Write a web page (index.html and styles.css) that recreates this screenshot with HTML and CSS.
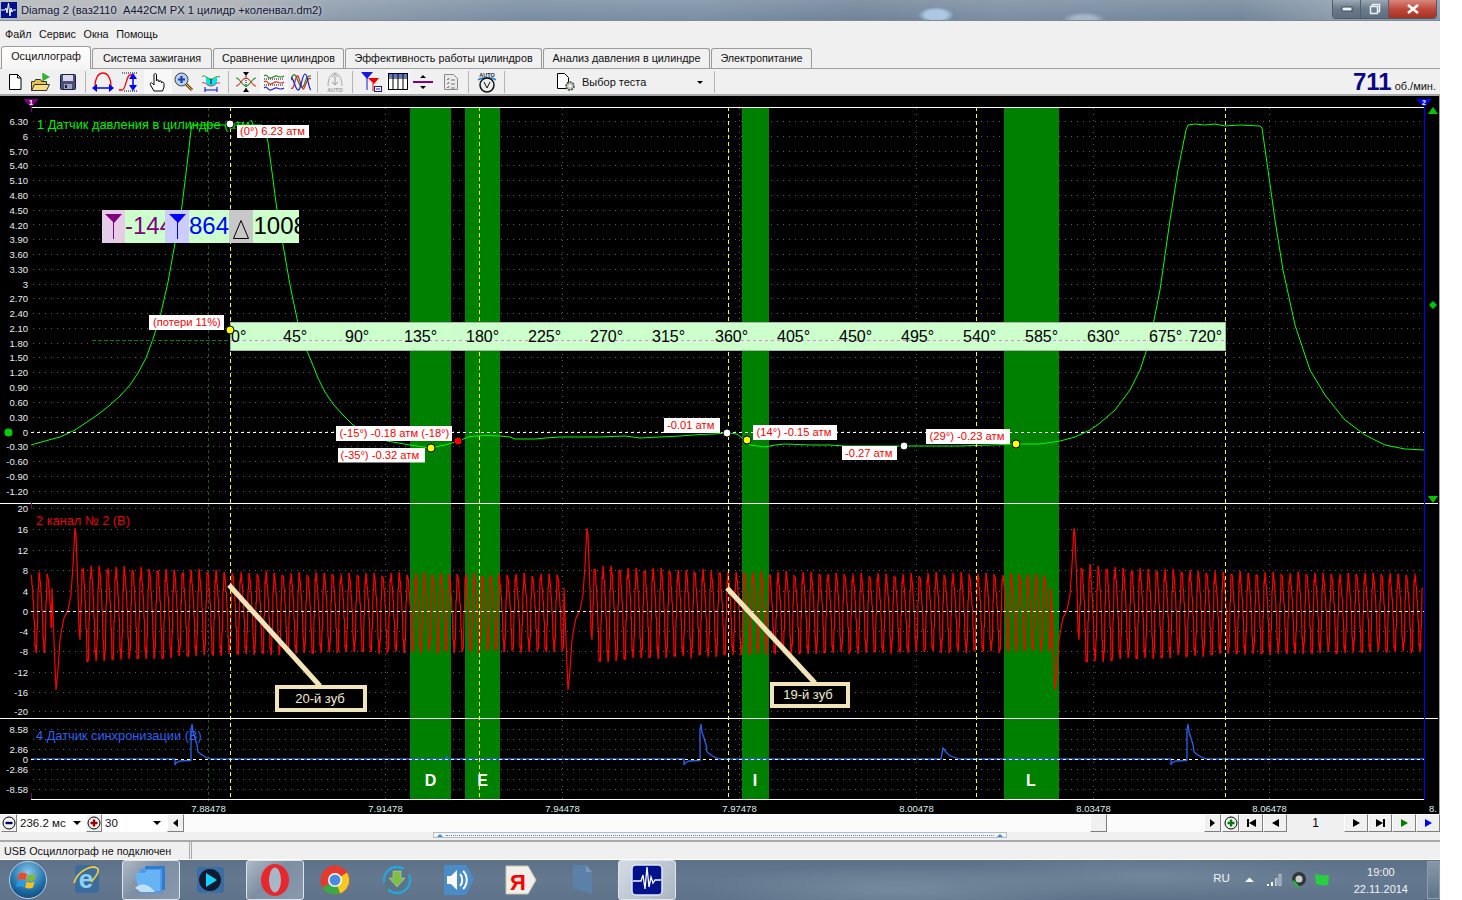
FILE: index.html
```html
<!DOCTYPE html>
<html lang="ru">
<head>
<meta charset="utf-8">
<title>Diamag 2</title>
<link rel="stylesheet" href="styles.css">
</head>
<body>
<div class="window">
  <header class="titlebar">
    <svg class="app-icon" width="16" height="16" viewBox="0 0 16 16"><rect width="16" height="16" fill="#00128c"/><path d="M0 8h4l1-2 1 5 1.500-10 1.500 13 1-8 1 4 1-2h3" fill="none" stroke="#fff"/></svg>
    <span class="title-text">Diamag 2 (ваз2110  A442CM PX 1 цилидр +коленвал.dm2)</span>
    <div class="winbtns">
      <span class="winbtn"><svg width="12" height="8" viewBox="0 0 12 8"><rect x="1" y="2" width="10" height="4" fill="#eef2f6" stroke="#445"/></svg></span>
      <span class="winbtn"><svg width="12" height="12" viewBox="0 0 12 12"><rect x="3.500" y="1.500" width="7" height="7" fill="none" stroke="#eef2f6" stroke-width="1.500"/><rect x="1.500" y="3.500" width="7" height="7" fill="#6d7f92" stroke="#eef2f6" stroke-width="1.500"/></svg></span>
      <span class="winbtn winbtn-close"><svg width="14" height="10" viewBox="0 0 14 10"><path d="M2 1l10 8M12 1L2 9" stroke="#fff" stroke-width="2.600"/></svg></span>
    </div>
  </header>

  <nav class="menubar">
    <span>Файл</span><span>Сервис</span><span>Окна</span><span>Помощь</span>
  </nav>

  <div class="tabs">
    <span class="tab tab-active t1">Осциллограф</span>
    <span class="tab t2">Система зажигания</span>
    <span class="tab t3">Сравнение цилиндров</span>
    <span class="tab t4">Эффективность работы цилиндров</span>
    <span class="tab t5">Анализ давления в цилиндре</span>
    <span class="tab t6">Электропитание</span>
  </div>

  <div class="toolbar">
    <span class="tb w27"><svg width="16" height="18" viewBox="0 0 16 18"><path d="M2.500 1.500h8l3.500 3.500v11.500h-11.500z" fill="#fff" stroke="#000"/><path d="M10.500 1.500v3.500h3.500" fill="none" stroke="#000"/></svg></span>
    <span class="tb w26"><svg width="22" height="20" viewBox="0 0 22 20"><path d="M1.500 18.500v-9h3l1-2h5l1 2h5v9z" fill="#e8c050" stroke="#333"/><path d="M1.500 18.500l3-6h15l-3 6z" fill="#f8dc80" stroke="#333"/><path d="M13 1v8" stroke="#080"/><path d="M13 1l7 4-7 4z" fill="#2cb52c"/></svg></span>
    <span class="tb w28"><svg width="16" height="16" viewBox="0 0 16 16"><rect x=".5" y=".5" width="15" height="15" rx="1" fill="#4a5078" stroke="#1c1c40"/><rect x="3" y="1" width="10" height="6" fill="#d8d8e8"/><rect x="4" y="10" width="8" height="5" fill="#9ea4c0"/><rect x="5" y="11" width="2" height="3" fill="#223"/></svg></span>
    <i class="tsep"></i>
    <span class="tb w27"><svg width="24" height="22" viewBox="0 0 24 22"><path d="M4 15C4 8 7 2 12 2s8 6 8 13" fill="none" stroke="#f00" stroke-width="1.300"/><path d="M4 17h16" stroke="#00f" stroke-width="1.500"/><path d="M1 17l5-4v8zM23 17l-5-4v8z" fill="#00f"/></svg></span>
    <span class="tb w28"><svg width="24" height="22" viewBox="0 0 24 22"><path d="M1 19h3c4 0 4-14 8-15h3" fill="none" stroke="#f00" stroke-width="1.300"/><path d="M4 2h15M6 20h13" stroke="#000" stroke-dasharray="1 1"/><path d="M15 5v12" stroke="#00f" stroke-width="1.500"/><path d="M15 2l4 6h-8zM15 20l4-6h-8z" fill="#00f"/></svg></span>
    <span class="tb w28 tb-on"><svg width="18" height="20" viewBox="0 0 18 20"><path d="M5 19l-3.500-6c-1-2 1-3 2-1.500L5 13V3c0-2 2.500-2 2.500 0v6c0-1.500 2.500-1.500 2.500 0v1c0-1.500 2.500-1.500 2.500 0v1c0-1.500 2.500-1 2.500.5V15l-1.500 4z" fill="#fff" stroke="#000"/></svg></span>
    <span class="tb w24"><svg width="20" height="20" viewBox="0 0 20 20"><path d="M12 12l6 6" stroke="#6a4a08" stroke-width="3"/><path d="M12 12l6 6" stroke="#e0c050" stroke-width="1"/><circle cx="7.500" cy="7.500" r="6.500" fill="#b6d0f0" stroke="#444"/><path d="M7.500 4v7M4 7.500h7" stroke="#1c3caa" stroke-width="2.200"/></svg></span>
    <span class="tb w29"><svg width="20" height="20" viewBox="0 0 20 20"><path d="M5 5l4 2h3l4-2v6l-3 3H7l-2-3z" fill="#00e8f0"/><path d="M1 5c2-3 5 1 8 2s6-4 10-2" fill="none" stroke="#1a9a1a"/><path d="M1 11c3-2 5 3 9 3s5-4 9-3" fill="none" stroke="#f03030"/><path d="M4 18h12M4 15v5M16 15v5" stroke="#00f" fill="none"/><path d="M10 7v5" stroke="#000"/></svg></span>
    <i class="tsep"></i>
    <span class="tb w28"><svg width="20" height="20" viewBox="0 0 20 20"><path d="M0 6c4 0 6 8 10 8s6-8 10-8" fill="none" stroke="#1a8a1a" stroke-width="1.200"/><path d="M0 14c4 0 6-8 10-8s6 8 10 8" fill="none" stroke="#e03030" stroke-width="1.200"/><path d="M10 0v20" stroke="#000" stroke-dasharray="1 1"/><path d="M7 0h6l-3 4zM7 20h6l-3-4z" fill="#000"/></svg></span>
    <span class="tb w28 tb-on"><svg width="20" height="20" viewBox="0 0 20 20"><path d="M0 4c3-3 4 3 7 2s4-3 6-2 4 2 7 0" fill="none" stroke="#1a8a1a" stroke-width="1.200"/><path d="M0 10c3-3 4 3 7 2s4-3 6-2 4 2 7 0" fill="none" stroke="#e02020" stroke-width="1.200"/><path d="M0 16c3-3 4 3 7 2s4-3 6-2 4 2 7 0" fill="none" stroke="#1818e0" stroke-width="1.200"/><path d="M0 7h20M0 13h20" stroke="#000" stroke-dasharray="1 1"/></svg></span>
    <span class="tb w26"><svg width="20" height="20" viewBox="0 0 20 20"><path d="M0 8c3-10 5-4 7 1s4 9 6 4 3-10 7-9" fill="none" stroke="#1a8a1a" stroke-width="1.200"/><path d="M0 16c3 3 4-10 6-12s4 12 6 13 4-14 8-10" fill="none" stroke="#e02020" stroke-width="1.200"/><path d="M0 5c4 4 4 12 7 13s4-16 7-16 3 14 6 16" fill="none" stroke="#1818e0" stroke-width="1.200"/></svg></span>
    <i class="tsep"></i>
    <span class="tb w28"><svg width="20" height="20" viewBox="0 0 20 20"><path d="M3 14C3 7 6 1 10 1s7 6 7 13" fill="#eee" stroke="#aaa"/><path d="M10 4v8" stroke="#999"/><path d="M7 5l3-3 3 3M7 10l3 3 3-3" fill="none" stroke="#999"/><text class="auto-mini auto-grey" x="10" y="19.500" text-anchor="middle">AUTO</text></svg></span>
    <i class="tsep"></i>
    <span class="tb w30"><svg width="22" height="22" viewBox="0 0 22 22"><path d="M1 1h12L7 8z" fill="#1818e0"/><path d="M7 7v12" stroke="#1818e0"/><path d="M8 7h11l-5 6z" fill="#f00000"/><path d="M13 12v8" stroke="#f00"/><rect x="14.500" y="15.500" width="7" height="5" fill="#fff" stroke="#1818a0"/><path d="M16 18h4" stroke="#1818a0"/></svg></span>
    <span class="tb w24 tb-on"><svg width="20" height="18" viewBox="0 0 20 18"><rect x=".5" y=".5" width="19" height="16" fill="#fff" stroke="#000"/><rect x="1" y="1" width="18" height="3" fill="#5878d8"/><path d="M5 1v16M10 1v16M15 1v16M1 5h18" stroke="#000"/></svg></span>
    <span class="tb w26"><svg width="20" height="18" viewBox="0 0 20 18"><path d="M0 9h20" stroke="#800080" stroke-width="2"/><path d="M7 5h6l-3-3zM7 13h6l-3 3z" fill="#000"/></svg></span>
    <span class="tb w29"><svg width="16" height="18" viewBox="0 0 16 18"><path d="M1.500 1.500h9l4 4v11h-13z" fill="#eaeaea" stroke="#888"/><path d="M4 6l1 1 1-2M4 10l1 1 1-2M4 14l1 1 1-2M8 7h4M8 11h4M8 15h4" fill="none" stroke="#777"/></svg></span>
    <i class="tsep"></i>
    <span class="tb w29"><svg width="22" height="22" viewBox="0 0 22 22"><text class="auto-mini auto-dark" x="11" y="5.500" text-anchor="middle">AUTO</text><path d="M2 9c4-3 14-3 18 0" fill="none" stroke="#1878e8" stroke-width="1.500"/><circle cx="11" cy="14" r="7" fill="#eee" stroke="#111" stroke-width="1.500"/><path d="M8 11l3 6 3-6" fill="none" stroke="#111"/></svg></span>
    <i class="tsep"></i>
    <div class="testsel">
      <svg width="22" height="20" viewBox="0 0 22 20"><path d="M1.500 1.500h7l4 4v11h-11z" fill="#fff" stroke="#000"/><circle cx="14" cy="14" r="4" fill="#b8c8a8" stroke="#444" stroke-width="1.500" stroke-dasharray="2 1"/><circle cx="14" cy="14" r="1.500" fill="#fff"/></svg>
      <span class="testsel-text">Выбор теста</span>
      <i class="caret"></i>
    </div>
    <i class="tsep"></i>
    <div class="rpm"><b>711</b><span>об./мин.</span></div>
  </div>

  <div class="chart">
    <svg id="scope" class="scope" width="1440" height="718" viewBox="0 96 1440 718">
      <g id="grid"></g>

      <g class="bars">
        <rect x="410" y="107" width="41" height="692"/>
        <rect x="465" y="107" width="35" height="692"/>
        <rect x="742" y="107" width="27" height="692"/>
        <rect x="1004" y="107" width="55" height="692"/>
      </g>

      <g class="frame">
        <path d="M31 107.500H1424M0 503.500H1438M0 718.500H1438M31 799.500H1424"/>
      </g>
      <path class="edge-blue" d="M1424.500 100V800"/>
      <path class="edge-purple" d="M31.500 100V112M31.500 503V509M31.500 793V799"/>
      <path class="marker-purple" d="M23 99h16l-8 8z"/>
      <text class="marker-num" x="31" y="104.500">1</text>
      <path class="marker-blue" d="M1416 99h16l-8 8z"/>
      <text class="marker-num" x="1424" y="104.500">2</text>
      <path class="tri" d="M1433 107l5 7h-10z"/>
      <path class="tri" d="M1433 301l4 4-4 4-4-4z"/>
      <path class="tri" d="M1428 496h10l-5 7z"/>
      <circle class="dot-green" cx="8.500" cy="432.500" r="4"/>

      <polyline id="trace1" class="trace-green"/>
      <polyline id="trace2" class="trace-red"/>
      <polyline id="trace4" class="trace-blue"/>

      <path class="zero" d="M31 432.500H1424M31 611.500H1424M31 759.500H1424"/>
      <path class="cursor" d="M230.500 107V799M479.500 107V799M728.500 107V799M976.500 107V799M1225.500 107V799"/>
      <path class="loss" d="M92 340.500H230"/>

      <g class="ruler">
        <rect class="ruler-bg" x="230.500" y="322.500" width="995" height="28"/>
        <path class="ruler-line" d="M231 340.500H1225"/>
        <g class="ruler-text">
          <text x="231" y="342">0°</text><text x="283" y="342">45°</text><text x="345" y="342">90°</text><text x="404" y="342">135°</text><text x="466" y="342">180°</text><text x="528" y="342">225°</text><text x="590" y="342">270°</text><text x="652" y="342">315°</text><text x="715" y="342">360°</text><text x="777" y="342">405°</text><text x="839" y="342">450°</text><text x="901" y="342">495°</text><text x="963" y="342">540°</text><text x="1025" y="342">585°</text><text x="1087" y="342">630°</text><text x="1149" y="342">675°</text><text x="1189" y="342">720°</text>
        </g>
      </g>

      <text class="ttl ttl-green" x="37" y="128.500">1 Датчик давления в цилиндре (атм)</text>
      <text class="ttl ttl-red" x="36" y="524.500">2 канал № 2 (В)</text>
      <text class="ttl ttl-blue" x="36" y="739.500">4 Датчик синхронизации (В)</text>

      <g class="axis">
        <text x="28" y="124.500">6.30</text><text x="28" y="139.500">6</text><text x="28" y="154.500">5.70</text><text x="28" y="168.500">5.40</text><text x="28" y="183.500">5.10</text><text x="28" y="198.500">4.80</text><text x="28" y="213.500">4.50</text><text x="28" y="228.500">4.20</text><text x="28" y="242.500">3.90</text><text x="28" y="257.500">3.60</text><text x="28" y="272.500">3.30</text><text x="28" y="287.500">3</text><text x="28" y="302">2.70</text><text x="28" y="316.500">2.40</text><text x="28" y="331.500">2.10</text><text x="28" y="346.500">1.80</text><text x="28" y="361">1.50</text><text x="28" y="376">1.20</text><text x="28" y="391">0.90</text><text x="28" y="405.500">0.60</text><text x="28" y="420.500">0.30</text><text x="28" y="435.500">0</text><text x="28" y="450">-0.30</text><text x="28" y="465">-0.60</text><text x="28" y="480">-0.90</text><text x="28" y="495">-1.20</text>
        <text x="28" y="512">20</text><text x="28" y="533">16</text><text x="28" y="554">12</text><text x="28" y="574">8</text><text x="28" y="595">4</text><text x="28" y="615">0</text><text x="28" y="635">-4</text><text x="28" y="655">-8</text><text x="28" y="676">-12</text><text x="28" y="696">-16</text><text x="28" y="715">-20</text>
        <text x="28" y="733">8.58</text><text x="28" y="753">2.86</text><text x="28" y="763">0</text><text x="28" y="773">-2.86</text><text x="28" y="793">-8.58</text>
      </g>
      <g class="xaxis">
        <text x="208.500" y="811.500">7.88478</text><text x="385.500" y="811.500">7.91478</text><text x="562.500" y="811.500">7.94478</text><text x="739.500" y="811.500">7.97478</text><text x="916.500" y="811.500">8.00478</text><text x="1093.500" y="811.500">8.03478</text><text x="1269.500" y="811.500">8.06478</text><text x="1433" y="811.500">8.</text>
      </g>

      <g class="legend">
        <rect class="lg-green" x="102" y="210" width="197" height="33"/>
        <rect class="lg-pink" x="102" y="210" width="23" height="33"/>
        <rect class="lg-blue" x="165" y="210" width="24" height="33"/>
        <rect class="lg-grey" x="229" y="210" width="24" height="33"/>
        <path class="ant-purple" d="M105 214h17l-8 9z"/><path class="ant-line-p" d="M113.500 218V239"/>
        <path class="ant-blue" d="M169 214h17l-8 9z"/><path class="ant-line-b" d="M177.500 218V239"/>
        <path class="delta" d="M233.500 238.500l7.500-18 7.500 18z"/>
        <svg x="125" y="210" width="40" height="33" viewBox="125 210 40 33"><text class="lg-text lg-t1" x="125" y="234">-144</text></svg>
        <text class="lg-text lg-t2" x="189" y="234">864</text>
        <svg x="253" y="210" width="46" height="33" viewBox="253 210 46 33"><text class="lg-text lg-t3" x="253.500" y="234">1008</text></svg>
      </g>

      <g class="tags">
        <rect x="237" y="125" width="72" height="13"/><rect x="149" y="315" width="75" height="15"/><rect class="tag-sh" x="338" y="448" width="87" height="14.500"/><rect x="336" y="426" width="116" height="15"/><rect x="664" y="418" width="56" height="15"/><rect x="753" y="425" width="84" height="15"/><rect x="842" y="446" width="55" height="14"/><rect x="926" y="429" width="84" height="15"/>
      </g>
      <g class="tag-text">
        <text x="240" y="135">(0°) 6.23 атм</text>
        <text x="153" y="326">(потери 11%)</text>
        <text x="339.500" y="437">(-15°) -0.18 атм (-18°)</text>
        <text x="340.500" y="459">(-35°) -0.32 атм</text>
        <text x="667" y="429">-0.01 атм</text>
        <text x="756.500" y="436">(14°) -0.15 атм</text>
        <text x="845" y="457">-0.27 атм</text>
        <text x="929.500" y="440">(29°) -0.23 атм</text>
      </g>

      <g class="dots">
        <circle class="d-w" cx="230" cy="124" r="4"/>
        <circle class="d-y" cx="230" cy="330" r="4"/>
        <circle class="d-y" cx="431" cy="448" r="4"/>
        <circle class="d-r" cx="458" cy="441" r="4"/>
        <circle class="d-w" cx="727" cy="433" r="4"/>
        <circle class="d-y" cx="747" cy="440" r="4"/>
        <circle class="d-w" cx="904" cy="446" r="4"/>
        <circle class="d-y" cx="1016" cy="444" r="4"/>
      </g>

      <path class="callout" d="M229 585L320 686M727 588L815 683"/>
      <rect class="callbox" x="277" y="687" width="88" height="23"/>
      <rect class="callbox" x="772" y="684" width="76" height="22"/>
      <text class="calltext" x="320" y="702.500">20-й зуб</text>
      <text class="calltext" x="808" y="698.500">19-й зуб</text>

      <g class="big-letters">
        <text x="430.500" y="786">D</text><text x="482.500" y="786">E</text><text x="755" y="786">I</text><text x="1031" y="786">L</text>
      </g>
    </svg>
  </div>

  <div class="controls">
    <span class="cbtn round"><svg width="14" height="14" viewBox="0 0 14 14"><circle cx="7" cy="7" r="6" fill="#f4f4f4" stroke="#000"/><path d="M3.500 7h7" stroke="#000066" stroke-width="2.400"/></svg></span>
    <span class="field f-time">236.2 мс<i class="caret"></i></span>
    <span class="cbtn round"><svg width="14" height="14" viewBox="0 0 14 14"><circle cx="7" cy="7" r="6" fill="#f4f4f4" stroke="#000"/><path d="M3.500 7h7M7 3.500v7" stroke="#a00000" stroke-width="2.400"/></svg></span>
    <span class="field f-num">30<i class="caret"></i></span>
    <span class="cbtn small"><i class="tri-l"></i></span>
    <div class="track"><span class="thumb"></span></div>
    <span class="cbtn small"><i class="tri-r"></i></span>
    <span class="cbtn round plusg"><svg width="14" height="14" viewBox="0 0 14 14"><circle cx="7" cy="7" r="6" fill="#f4f4f4" stroke="#000"/><path d="M3.500 7h7M7 3.500v7" stroke="#008000" stroke-width="2.400"/></svg></span>
    <span class="cbtn nav"><i class="bar"></i><i class="tri-l big"></i></span>
    <span class="cbtn nav"><i class="tri-l big"></i></span>
    <span class="pageno">1</span>
    <span class="cbtn nav"><i class="tri-r big"></i></span>
    <span class="cbtn nav"><i class="tri-r big"></i><i class="bar"></i></span>
    <span class="cbtn nav"><i class="tri-r big green"></i></span>
    <span class="cbtn nav"><i class="tri-r big blue"></i></span>
  </div>

  <div class="hscroll">
    <div class="hthumb"><i class="up"></i><span class="hdots"></span><i class="up"></i></div>
  </div>

  <div class="statusbar">
    <span class="status-a">USB Осциллограф не подключен</span>
    <span class="status-b"></span>
  </div>

  <footer class="taskbar">
    <span class="orb"><svg width="40" height="40" viewBox="0 0 40 40"><defs><radialGradient id="orbg" cx=".5" cy=".3" r=".8"><stop offset="0" stop-color="#8cc8ec"/><stop offset=".6" stop-color="#1f6fa8"/><stop offset="1" stop-color="#0c3a68"/></radialGradient></defs><circle cx="20" cy="20" r="18.500" fill="url(#orbg)" stroke="#b8cfe0"/><path d="M11 14c3-2 5-1 8 0l-1.500 6c-3-1-5-1-8 0z" fill="#f04a24"/><path d="M20 14.500c3 1 5 1 8-.5l-1.500 6c-3 1.500-5 1-8 .5z" fill="#7dbb2c"/><path d="M9.500 21c3-1 5-1 8 0L16 27c-3-1-5-1-8 0z" fill="#2c9ae0"/><path d="M18.500 22c3 1 5 1 8-.5L25 27.500c-3 1.500-5 1-8 0z" fill="#f6c020"/></svg></span>
    <span class="slot"><svg width="34" height="36" viewBox="0 0 34 36"><rect x="5" y="3" width="24" height="28" rx="3" fill="#3c6c9c"/><text class="ie" x="16" y="26">e</text><path d="M4 21C8 8 22 3 27 6c3 2 0 8-6 14" fill="none" stroke="#f0c838" stroke-width="1.800"/></svg></span>
    <span class="slot slot-on"><svg width="36" height="32" viewBox="0 0 36 32"><path d="M12 2h20v24H12z" fill="#2e7cd0"/><path d="M7 5h22v24H7z" fill="#4e9ae8"/><path d="M2 9h10l2-3h13v21H6z" fill="#66b4f4"/><path d="M2 24c6-6 14-4 20 4H8z" fill="#bfe0fa"/></svg></span>
    <span class="slot"><svg width="32" height="32" viewBox="0 0 32 32"><rect x="2" y="3" width="27" height="26" rx="3" fill="#3b6ca4"/><circle cx="15" cy="16" r="11" fill="#0e1c30"/><path d="M11 9l11 7-11 7z" fill="#18d0ff"/></svg></span>
    <span class="slot slot-on"><svg width="30" height="34" viewBox="0 0 30 34"><ellipse cx="15" cy="17" rx="14" ry="16" fill="#e8262c"/><ellipse cx="15" cy="17" rx="6" ry="12.500" fill="#a6b8c8"/></svg></span>
    <span class="slot"><svg width="30" height="30" viewBox="0 0 30 30"><circle cx="15" cy="15" r="14.500" fill="#e53a2e"/><path d="M15 15L27 7.500A14.500 14.500 0 0 1 20 28.600z" fill="#f6c822"/><path d="M15 15L20 28.600A14.500 14.500 0 0 1 2.400 22.500z" fill="#3ba745"/><circle cx="15" cy="15" r="7" fill="#fff"/><circle cx="15" cy="15" r="5.500" fill="#4a8cdc"/></svg></span>
    <span class="slot"><svg width="32" height="32" viewBox="0 0 32 32"><circle cx="16" cy="16" r="13" fill="#5c7488" stroke="#29a6d8" stroke-width="2.400" stroke-dasharray="30 8"/><path d="M12 7h8v7h4l-8 9-8-9h4z" fill="#7fbf42" stroke="#cce" stroke-width=".5"/></svg></span>
    <span class="slot"><svg width="32" height="36" viewBox="0 0 32 36"><path d="M1 3h22l8 14-8 16H1z" fill="#4a8cc8"/><path d="M4 14h4l6-6v20l-6-6H4z" fill="#fff"/><path d="M17 12c3 3 3 9 0 12M20 9c5 5 5 13 0 18" fill="none" stroke="#fff" stroke-width="2"/></svg></span>
    <span class="slot"><svg width="34" height="32" viewBox="0 0 34 32"><path d="M2 2h22l8 14-8 14H2z" fill="#f2f0ea" stroke="#c8c0b0"/><text class="ya" x="6" y="26">Я</text></svg></span>
    <span class="slot"><svg width="22" height="32" viewBox="0 0 22 32"><path d="M1 1h13l6 7v22L1 24z" fill="#5d80a8"/><path d="M14 1l6 7h-6z" fill="#7898bc"/></svg></span>
    <span class="slot slot-on slot-app"><svg width="32" height="32" viewBox="0 0 32 32"><rect x="1" y="1" width="30" height="30" rx="4" fill="#00128c" stroke="#dfe8f4" stroke-width="1.500"/><path d="M2 17h8l2-6 2 14 2-22 2 20 2-10 2 6 2-3h6" fill="none" stroke="#fff" stroke-width="1.300"/></svg></span>
    <div class="tray">
      <span class="lang">RU</span>
      <svg class="tray-caret" width="9" height="6" viewBox="0 0 9 6"><path d="M0 5l4.500-4.500L9 5z" fill="#f4f6f8"/></svg>
      <svg class="tray-signal" width="16" height="12" viewBox="0 0 16 12"><path d="M1 10h2v2H1z" fill="#fff"/><path d="M5 8h2v4H5z" fill="#fff"/><path d="M9.500 4.500h1.500v7H9.500zM13 .5h2v11h-2z" fill="none" stroke="#c8d0d8"/></svg>
      <svg class="tray-spk" width="16" height="18" viewBox="0 0 16 18"><circle cx="9" cy="8" r="7" fill="#30363a"/><circle cx="9" cy="8" r="3.500" fill="#c8ccc8"/><path d="M2 11l5 6 3-1-6-7z" fill="#2cae4a"/></svg>
      <svg class="tray-flag" width="16" height="14" viewBox="0 0 16 14"><path d="M1 1c4 1 9 2 14 1l-1 10c-4 1-8 0-12-1z" fill="#26d040"/></svg>
      <div class="clock"><span>19:00</span><span>22.11.2014</span></div>
      <span class="showdesk"></span>
    </div>
  </footer>
</div>
<script src="app.js"></script>
</body>
</html>
```

FILE: styles.css
```css
html, body {
  margin: 0;
  padding: 0;
  background: #fff;
  overflow: hidden;
}
body {
  font-family: "Liberation Sans", Arial, sans-serif;
  font-size: 11px;
  color: #000;
}
.window {
  width: 1440px;
  height: 900px;
  display: flex;
  flex-direction: column;
  background: #f0f0f0;
}
.titlebar {
  height: 21px;
  box-sizing: border-box;
  flex: none;
  display: flex;
  align-items: center;
  border-bottom: 1px solid #7f8a94;
  background:
    radial-gradient(ellipse 18px 8px at 936px 15px, rgba(176,205,232,.9) 0 60%, transparent 100%),
    radial-gradient(ellipse 22px 8px at 1084px 20px, rgba(184,200,216,.7) 0 50%, transparent 100%),
    linear-gradient(180deg, rgba(255,255,255,.14), rgba(255,255,255,0)),
    linear-gradient(90deg, #b4b8bb 0, #a8adb2 240px, #8d9cac 330px, #788ca2 520px, #7a8ea4 700px, #6f8398 860px, #7b8da2 1000px, #71869a 1240px, #8d9cac 1340px, #8a98a8 1440px);
}
.app-icon {
  margin: 0 0 0 1px;
  flex: none;
}
.title-text {
  margin-left: 4px;
  font-size: 11.200px;
  color: #11163c;
  white-space: pre;
  text-shadow: 0 0 4px #e4e4e4;
}
.winbtns {
  margin-left: auto;
  margin-right: 3px;
  align-self: flex-start;
  display: flex;
  height: 18px;
  border: 1px solid #4e5c6a;
  border-top: 0;
  border-radius: 0 0 4px 4px;
  overflow: hidden;
}
.winbtn {
  width: 27px;
  display: flex;
  align-items: center;
  justify-content: center;
  background: linear-gradient(180deg, #9ba8b5, #6a7a8b 50%, #5e6e80);
  border-right: 1px solid #52606e;
}
.winbtn-close {
  width: 47px;
  border-right: 0;
  background: linear-gradient(180deg, #d9877c, #bf4a3c 50%, #a63024);
}
.menubar {
  height: 25px;
  flex: none;
  display: flex;
  align-items: center;
  gap: 7.500px;
  padding: 0 0 0 5px;
  font-size: 10.800px;
  color: #111;
  box-sizing: border-box;
}
.tabs {
  height: 23px;
  flex: none;
  box-sizing: border-box;
  display: flex;
  align-items: flex-end;
  border-bottom: 1px solid #a0a0a0;
  padding-left: 1px;
  gap: 1px;
}
.tab {
  height: 20px;
  box-sizing: border-box;
  border: 1px solid #9a9a9a;
  border-bottom: 0;
  border-radius: 3px 3px 0 0;
  background: #f0f0f0;
  display: flex;
  align-items: center;
  justify-content: center;
  font-size: 10.800px;
  color: #111;
  white-space: nowrap;
  padding-bottom: 2px;
}
.tab-active {
  height: 23px;
  margin-bottom: -1px;
  background: #fff linear-gradient(180deg, #fff, #f4f4f4);
  padding-bottom: 4px;
}
.t1 { width: 90px; }
.t2 { width: 120px; }
.t3 { width: 131px; }
.t4 { width: 197px; }
.t5 { width: 167px; }
.t6 { width: 101px; }
.toolbar {
  height: 27px;
  flex: none;
  box-sizing: border-box;
  display: flex;
  align-items: center;
  border-bottom: 2px solid #a8a8a8;
  padding: 0 4px 0 1px;
}
.tb {
  height: 24px;
  flex: none;
  display: flex;
  align-items: center;
  justify-content: center;
}
.w24 { width: 24px; }
.w26 { width: 26px; }
.w27 { width: 27px; }
.w28 { width: 28px; }
.w29 { width: 29px; }
.w30 { width: 30px; }
.tb-on { background: #f8f8f8; }
.tsep {
  width: 1px;
  height: 22px;
  flex: none;
  background: #b4b4b4;
  margin: 0 3px;
}
.auto-mini {
  font: bold 5.500px "Liberation Sans", sans-serif;
}
.auto-grey { fill: #9a9a9a; }
.auto-dark { fill: #223; }
.testsel {
  width: 203px;
  box-sizing: border-box;
  padding-left: 48px;
  display: flex;
  align-items: center;
  flex: none;
}
.testsel-text {
  font-size: 11px;
  margin-left: 4px;
  color: #111;
}
.caret {
  width: 0;
  height: 0;
  border: 4px solid transparent;
  border-top-color: #000;
  border-bottom: 0;
  display: inline-block;
}
.testsel .caret {
  margin-left: 51px;
  margin-top: 2px;
  border-width: 3px;
  border-bottom: 0;
}
.rpm {
  margin-left: auto;
  display: flex;
  align-items: baseline;
  color: #111;
}
.rpm b {
  font-size: 24px;
  font-weight: bold;
  color: #0a0a80;
  margin-right: 3px;
  line-height: 24px;
}
.rpm span {
  font-size: 11px;
}
.chart {
  height: 718px;
  flex: none;
  background: #000;
  width: 1439px;
  border-right: 1px solid #a0a0a0;
  overflow: hidden;
}
.scope {
  display: block;
  font-family: "Liberation Sans", Arial, sans-serif;
}
.grid-dot {
  stroke: #5c5c5c;
  stroke-width: 1;
  stroke-dasharray: 1 5;
  fill: none;
}
.grid-first {
  stroke: #176017;
  stroke-dasharray: 3 3;
  fill: none;
}
.bars rect { fill: #008000; }
.frame path { stroke: #fff; stroke-width: 1; fill: none; }
.edge-blue { stroke: #0000ff; stroke-width: 1; fill: none; }
.edge-purple { stroke: #800080; fill: none; }
.marker-purple { fill: #800080; }
.marker-blue { fill: #0000ff; }
.marker-num {
  font-size: 7px;
  font-weight: bold;
  fill: #fff;
  text-anchor: middle;
}
.tri { fill: #00c800; }
.dot-green { fill: #00d000; }
.trace-green { stroke: #00ff00; stroke-width: 1; fill: none; }
.trace-red { stroke: #ff0000; stroke-width: 1.200; fill: none; stroke-linejoin: miter; }
.trace-blue { stroke: #2864f0; stroke-width: 1.300; fill: none; }
.zero { stroke: #fff; stroke-dasharray: 3 3; fill: none; }
.cursor { stroke: #ffff00; stroke-dasharray: 4 3; fill: none; }
.loss { stroke: #008000; stroke-dasharray: 4 2; fill: none; }
.ruler-bg { fill: #ccffcc; stroke: #a8b8a8; }
.ruler-line { stroke: #d88ad8; stroke-dasharray: 3 3; fill: none; }
.ruler-text text { font-size: 16px; fill: #000; }
.ttl { font-size: 12.800px; }
.ttl-green { fill: #00f000; }
.ttl-red { fill: #e80000; }
.ttl-blue { fill: #2864f0; }
.axis text {
  font-size: 9.500px;
  fill: #e8eef4;
  text-anchor: end;
}
.xaxis text {
  font-size: 9.500px;
  fill: #d8f0e8;
  text-anchor: middle;
}
.lg-green { fill: #ccffcc; }
.lg-pink { fill: #e6cce6; }
.lg-blue { fill: #ccccff; }
.lg-grey { fill: #c8c8c8; }
.ant-purple { fill: #800080; }
.ant-blue { fill: #0000ff; }
.ant-line-p { stroke: #800080; fill: none; }
.ant-line-b { stroke: #0000ff; fill: none; }
.delta { fill: none; stroke: #000; }
.lg-text { font-size: 24px; }
.lg-t1 { fill: #800080; }
.lg-t2 { fill: #0000ff; }
.lg-t3 { fill: #000; }
.tags rect { fill: #fff; }
.tags .tag-sh { stroke: #000; stroke-width: 0; }
.tag-text text { font-size: 11.200px; fill: #ff0000; }
.dots circle { stroke: #000; stroke-width: 1; }
.d-w { fill: #fff; }
.d-y { fill: #ffff00; }
.d-r { fill: #ff0000; }
.callout { stroke: #f0e4b8; stroke-width: 5; fill: none; }
.callbox { fill: #000; stroke: #f0e4b8; stroke-width: 4; }
.calltext {
  font-size: 13px;
  fill: #f4ecd0;
  text-anchor: middle;
}
.big-letters text {
  font-size: 16px;
  font-weight: bold;
  fill: #fff;
  text-anchor: middle;
}
.controls {
  height: 18px;
  flex: none;
  display: flex;
  align-items: stretch;
  background: #f0f0f0;
  padding-left: 1px;
  box-sizing: border-box;
}
.cbtn {
  flex: none;
  box-sizing: border-box;
  border: 1px solid;
  border-color: #fff #808080 #808080 #fff;
  background: #f0f0f0;
  display: flex;
  align-items: center;
  justify-content: center;
}
.round { width: 16px; }
.small { width: 17px; margin-left: 0; }
.nav { width: 24px; }
.plusg { width: 17px; margin-left: 1px; }
.field {
  background: #fff;
  font-size: 11.500px;
  display: flex;
  align-items: center;
  justify-content: space-between;
  box-sizing: border-box;
  padding: 0 5px 0 3px;
  flex: none;
  color: #111;
}
.f-time { width: 69px; }
.f-num { width: 65px; padding-right: 6px; }
.track {
  flex: 1;
  background: #fbfbfb;
  padding-left: 906px;
  display: flex;
  box-sizing: border-box;
}
.thumb {
  width: 17px;
  box-sizing: border-box;
  border: 1px solid;
  border-color: #fff #808080 #808080 #fff;
  background: #f0f0f0;
}
.tri-l, .tri-r {
  width: 0;
  height: 0;
  display: block;
  border-style: solid;
  border-color: transparent;
}
.tri-l { border-width: 4px 5px 4px 0; border-right-color: #000; }
.tri-r { border-width: 4px 0 4px 5px; border-left-color: #000; }
.tri-l.big { border-width: 4px 7px 4px 0; }
.tri-r.big { border-width: 4px 0 4px 7px; }
.tri-r.green { border-left-color: #008000; }
.tri-r.blue { border-left-color: #0000ff; }
.bar {
  width: 2px;
  height: 8px;
  background: #000;
  display: block;
}
.pageno {
  width: 57px;
  flex: none;
  font-size: 12px;
  display: flex;
  align-items: center;
  justify-content: center;
}
.hscroll {
  height: 8px;
  flex: none;
  box-sizing: border-box;
  padding-left: 433px;
  background: #f0f0f0;
  border-bottom: 0;
}
.hthumb {
  width: 574px;
  height: 6px;
  box-sizing: border-box;
  border: 1px solid #b4bcc6;
  background: #f2f4f6;
  display: flex;
  align-items: center;
  padding: 0 3px;
  gap: 3px;
}
.hdots {
  flex: 1;
  border-top: 1px dotted #4a90e0;
}
.up {
  width: 0;
  height: 0;
  border: 3px solid transparent;
  border-bottom: 3px solid #3a88e0;
  border-top: 0;
}
.statusbar {
  height: 20px;
  flex: none;
  box-sizing: border-box;
  display: flex;
  border-top: 2px solid #a8a8a8;
  border-bottom: 1px solid #fff;
  background: #f0f0f0;
}
.status-a {
  width: 190px;
  box-sizing: border-box;
  padding-left: 4px;
  font-size: 10.800px;
  display: flex;
  align-items: center;
  border-right: 1px solid #a8a8a8;
  color: #111;
}
.status-b {
  flex: 1;
  margin-left: 1px;
  border-left: 1px solid #a8a8a8;
}
.taskbar {
  height: 40px;
  flex: none;
  display: flex;
  align-items: center;
  color: #f0f4f8;
  background:
    radial-gradient(ellipse 200px 26px at 900px 30px, rgba(140,158,180,.45), transparent),
    radial-gradient(ellipse 200px 24px at 1150px 15px, rgba(140,158,180,.35), transparent),
    linear-gradient(180deg, #5d7288, #64798f 50%, #5e7389);
  box-sizing: border-box;
}
.orb {
  width: 56px;
  flex: none;
  display: flex;
  justify-content: center;
  padding-right: 1px;
  box-sizing: border-box;
}
.slot {
  width: 62px;
  height: 40px;
  flex: none;
  box-sizing: border-box;
  display: flex;
  align-items: center;
  justify-content: center;
  border: 2px solid transparent;
}
.slot-on {
  border-radius: 3px;
  border: 1px solid #dde4ec;
  margin: 0 0 0 4px;
  width: 58px;
  background: linear-gradient(135deg, #aeb9c6, #7d8ea2 45%, #8a9aae);
}
.slot-app {
  background: linear-gradient(135deg, #d4dbe3, #aab6c2);
}
.ie {
  font: bold 26px "Liberation Sans", sans-serif;
  fill: #8ad0f8;
  text-anchor: middle;
}
.ya {
  font: bold 22px "Liberation Sans", sans-serif;
  fill: #f00;
}
.tray {
  margin-left: auto;
  display: flex;
  align-items: center;
  height: 40px;
}
.lang {
  font-size: 11.500px;
  margin-right: 15px;
  padding-bottom: 5px;
}
.tray-caret { margin-right: 12px; }
.tray-signal { margin-right: 8px; }
.tray-spk { margin-right: 8px; }
.tray-flag { margin-right: 24px; }
.clock {
  display: flex;
  flex-direction: column;
  align-items: center;
  gap: 3px;
  font-size: 11px;
  line-height: 14px;
  margin-right: 19px;
  padding-top: 1px;
}
.showdesk {
  width: 13px;
  height: 38px;
  box-sizing: border-box;
  border: 1px solid #8e9dad;
  background: linear-gradient(180deg, #8797a8, #5f7389);
}
```

FILE: app.js
```js
(function () {
  var NS = 'http://www.w3.org/2000/svg';

  function gridLine(parent, d, cls) {
    var p = document.createElementNS(NS, 'path');
    p.setAttribute('d', d);
    p.setAttribute('class', cls);
    parent.appendChild(p);
  }

  var grid = document.getElementById('grid');
  var ys = [];
  var i;
  for (i = 0; i < 26; i++) {
    ys.push(Math.round(121 + i * 14.78) + 0.5);
  }
  [508, 529, 550, 570, 591, 631, 651, 672, 692, 711, 729, 739, 749, 769, 779, 789].forEach(function (y) {
    ys.push(y + 0.5);
  });
  ys.forEach(function (y) {
    gridLine(grid, 'M33 ' + y + 'H1424', 'grid-dot');
  });
  [385, 562, 739, 916, 1093, 1269].forEach(function (x) {
    gridLine(grid, 'M' + (x + 0.5) + ' 108V804', 'grid-dot');
  });
  gridLine(grid, 'M208.500 108V804', 'grid-first');

  /* Cylinder pressure */
  var p1 = [[31,445],[45,441],[60,437],[75,430],[90,420],[100,413],[110,405],[120,396],[130,385],[138,373],[146,358],[153,339],[160,317],[168,282],[175,243],[181.700,208],[187,165],[191,130],[192,125],[205,125],[262,125],[264,128],[268,142],[272,172],[276.700,208],[282.700,243],[290,285],[297.700,322],[304,344],[310,358],[318,378],[325,392],[333,404],[343,415],[353,425],[370,435],[387,441],[410,445],[430,448],[445,445],[458,441],[470,436.500],[485,435.500],[500,436],[510,437],[515,439],[535,439],[545,438],[560,437],[600,437],[625,436],[640,438],[660,437],[680,436],[700,434.500],[714,434],[727,433],[737,434],[745,440],[750,445],[765,447],[775,445],[785,444],[810,445],[830,445],[845,446],[880,446],[904,446],[930,446],[960,446],[990,445],[1016,444],[1040,444],[1060,441],[1075,437],[1090,430],[1100,423],[1115,410],[1130,390],[1140,370],[1150,340],[1160,290],[1170,220],[1178,170],[1186,130],[1188,125],[1195,124],[1205,125],[1215,124],[1225,126],[1240,125],[1260,126],[1262,128],[1268,170],[1275,220],[1283,270],[1295,325],[1310,370],[1325,395],[1345,420],[1365,435],[1385,445],[1405,449],[1424,450]];
  document.getElementById('trace1').setAttribute('points', p1.map(String).join(' '));

  /* Ignition channel */
  var seed = 7;
  function rnd() {
    seed = (seed * 16807) % 2147483647;
    return seed / 2147483647;
  }
  var spikes = [56, 568, 1055];
  var shape = [[-4,588],[-2,640],[0,690],[2,670],[4,640],[6,628],[8,618],[12,610],[15,595],[17,565],[19,528],[20,535],[22,590],[23,630],[24,640]];
  var pts = [];
  var P = 8.33;
  function osc(from, to, origin) {
    for (var x = from; x < to; x++) {
      var t = x - origin;
      var ph = (t / P) * Math.PI * 2;
      var top = 7.800 + 2 * Math.exp(-t / 130);
      var bot = 7.900 + 2.2 * Math.exp(-t / 130);
      var s = Math.sin(ph) * 0.86 + Math.sin(2 * ph + 0.6) * 0.2;
      s = Math.max(-1, Math.min(1, s * 1.12));
      var v = s > 0 ? s * top : s * bot;
      v += (rnd() - 0.5) * 0.5;
      var y = Math.round(611 - v * 5.1);
      pts.push([x, y]);
      pts.push([x + 0.5, Math.round(611 - (v * 0.96) * 5.1)]);
    }
  }
  osc(31, spikes[0] - 4, 31 - 260);
  shape.forEach(function (q) { pts.push([spikes[0] + q[0], q[1]]); });
  osc(spikes[0] + 25, spikes[1] - 4, spikes[0] + 25);
  shape.forEach(function (q) { pts.push([spikes[1] + q[0], q[1]]); });
  osc(spikes[1] + 25, spikes[2] - 4, spikes[1] + 25);
  shape.forEach(function (q) { pts.push([spikes[2] + q[0], q[1]]); });
  osc(spikes[2] + 25, 1423, spikes[2] + 25);
  document.getElementById('trace2').setAttribute('points', pts.map(String).join(' '));

  /* Sync sensor */
  function pulse(x0) {
    return [[x0,759],[x0,765],[x0+1,763],[x0+5,761],[x0+15,760.500],[x0+16,760],[x0+16,730],[x0+17,724],[x0+18,732],[x0+20,738],[x0+22,745],[x0+23,752],[x0+27,755],[x0+32,758],[x0+36,759]];
  }
  var b = [[31,759]];
  b = b.concat(pulse(175));
  b = b.concat([[445,759],[447,757],[449,759]]);
  b = b.concat(pulse(684));
  b = b.concat([[941,759],[943,748],[946,752],[949,755],[953,757],[960,759]]);
  b = b.concat(pulse(1171));
  b.push([1424, 759]);
  document.getElementById('trace4').setAttribute('points', b.map(String).join(' '));
})();
```
